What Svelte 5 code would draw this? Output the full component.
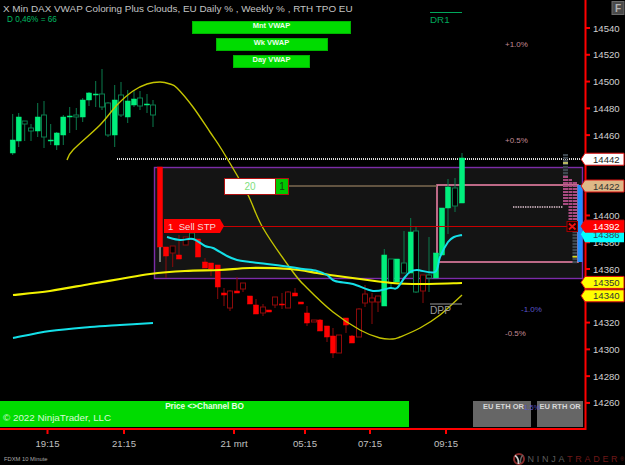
<script>
  const priceY = (p) => 28 + (14540 - p) * 1.339;

  // x, wick top, wick bottom, body top, body bottom, filled
  const green = [
    [12.7,114,155,140,153,1],[18.7,113,147,117,141,1],[24.7,121,141,121,124,0],[31,124,141,128,131,0],
    [37.7,103,137,117,131,1],[44,101,148,115,137,0],[50.7,124,145,140,141,1],[56.7,132,150,133,145,1],
    [63.3,115,145,117,135,1],[69.7,107,133,116,117,1],[76.3,108,130,115,117,0],[82.7,98,122,100,117,1],
    [89,92,106,93,100,1],[95.7,81,107,94,95,1],[102,69,110,94,107,0],[108,102,137,103,135,0],
    [114.7,85,147,100,135,1],[121,82,117,95,115,0],[127.7,90,123,101,117,1],[134,90,107,99,105,1],
    [140,91,110,98,106,0],[147,94,113,104,105,1],[153,100,127,105,115,0],
    [192,233,239,233,239,0],
    [384.3,249,306,255,306,1],[391,259,288,259,283,0],[397,259,282,259,282,1],[404,231,273,263,273,0],
    [410.7,218,273,232,273,1],[416,226,293,231,292,0],[429,237,292,275,278,0],[436,253,278,253,278,1],
    [442,208,255,208,255,1],[448,179,234,187,208,1],[455,178,212,188,206,0],[462,153,203,158,203,1]
  ];
  const red = [
    [160,167,247,167,247,1],[166,247,278,247,256,1],[172.7,246,267,246,253,0],[179,235,259,255,259,1],
    [185.7,237,245,237,245,0],[198,239,257,239,257,1],[205,258,268,262,268,1],[211,263,276,263,269,1],
    [217.7,265,299,265,287,1],[224,288,306,293,295,1],[230,290,311,291,308,0],[237,277,293,291,293,1],
    [243,283,292,283,289,0],[250,296,304,296,304,1],[256,299,314,305,314,1],[263,304,316,307,313,0],
    [269,310,312,310,312,1],[275,297,308,297,305,0],[282,293,309,304,305,1],[288,291,308,292,308,0],
    [295,288,296,293,296,1],[301,302,304,302,304,1],[307,306,326,313,323,1],[314,320,322,320,322,0],
    [320,319,331,320,331,1],[327,326,342,326,337,1],[333,328,358,336,353,1],[339,335,353,335,353,0],
    [346,318,333,318,325,1],[352,335,343,336,343,1],[359,308,337,309,337,0],[365,285,307,294,303,0],
    [372,293,324,298,302,0],[378,296,312,296,302,0],[423,275,303,275,291,0]
  ];

  const axisPrices = [14540,14520,14500,14480,14460,14400,14380,14360,14320,14300,14280,14260];
  const tickPrices = [14540,14520,14500,14480,14460,14440,14420,14400,14380,14360,14340,14320,14300,14280,14260];
  const flags = [
    { price: 14442, fill: '#ffffff', text: '#222222' },
    { price: 14422, fill: '#deb887', text: '#333333' },
    { price: 14386, fill: '#00ffff', text: '#334455', h: 8, noBorder: true },
    { price: 14392, fill: '#ff0000', text: '#ffffff' },
    { price: 14350, fill: '#ffff00', text: '#333333' },
    { price: 14340, fill: '#ffff00', text: '#333333' }
  ];
  const flagPoints = (y, h = 6) => `581,${y} 585,${y - h} 624,${y - h} 624,${y + h} 585,${y + h}`;

  // catmull-rom through the sampled points
  const smooth = (pts) => {
    let d = `M${pts[0][0]} ${pts[0][1]}`;
    for (let i = 0; i < pts.length - 1; i++) {
      const p0 = pts[Math.max(i - 1, 0)];
      const p1 = pts[i];
      const p2 = pts[i + 1];
      const p3 = pts[Math.min(i + 2, pts.length - 1)];
      const c1x = p1[0] + (p2[0] - p0[0]) / 6;
      const c1y = p1[1] + (p2[1] - p0[1]) / 6;
      const c2x = p2[0] - (p3[0] - p1[0]) / 6;
      const c2y = p2[1] - (p3[1] - p1[1]) / 6;
      d += `C${c1x} ${c1y} ${c2x} ${c2y} ${p2[0]} ${p2[1]}`;
    }
    return d;
  };

  const bigCurve = smooth([[67,160],[73,150],[100,125],[117,105],[133,91],[147,84],[160,82],[170,84],[177,88],[193,107],[210,132],[222,150],[247,193],[263,228],[293,272],[307,288],[333,312],[360,330],[380,338],[393,339],[400,337],[420,328],[440,315],[462,295]]);
  const vwap = smooth([[13,295],[50,291],[90,284],[120,279],[150,274],[185,271],[220,270],[250,268],[290,269],[317,273],[330,275],[360,279],[392,283],[420,284],[462,283]]);
  const cyanLow = smooth([[13,338],[50,331],[90,327],[120,325],[153,323]]);
  const cyanHigh = smooth([[167,237],[180,240],[193,239],[205,246],[213,248],[227,256],[237,260],[250,262],[267,264],[290,267],[303,269],[317,271],[327,275],[335,281],[353,284],[373,291],[390,288],[397,288],[405,277],[410,272],[417,270],[435,272],[440,257],[448,242],[454,237],[462,235]]);

  const rows = (x0, y0, y1, w) => {
    const out = [];
    for (let y = y0; y < y1; y += 3) out.push({ x: x0, y, w });
    return out;
  };
  const pinkRows = [...rows(563, 176, 206, 5), ...rows(568.5, 179, 222, 3.5), ...rows(572.5, 182, 222, 4.5)];
  const greyRows = [...rows(563, 154, 176, 5), ...rows(572.5, 222, 262, 4.5)];

  const timeTicks = [
    { x: 47.5, label: '19:15' },
    { x: 124, label: '21:15' },
    { x: 234, label: '21 mrt' },
    { x: 305, label: '05:15' },
    { x: 370, label: '07:15' },
    { x: 446, label: '09:15' }
  ];
</script>

<div class="screen">
  <div class="chart">
    <svg class="plot" width="625" height="431" viewBox="0 0 625 431">
      <rect x="154.5" y="167.5" width="428" height="111" class="cloud" />
      <rect x="437" y="185" width="141" height="77" class="pink-box" />
      <line x1="117" y1="159" x2="581" y2="159" class="dotted" />
      <line x1="289" y1="186" x2="437" y2="186" class="tan" />
      <line x1="513" y1="207" x2="563" y2="207" class="dotted-pink" />

      {#each greyRows as r}
        <rect x={r.x} y={r.y} width={r.w} height="2.2" class="grey-row" />
      {/each}
      <rect x="563" y="162" width="5" height="2" fill="#b8b860" />
      <rect x="572.5" y="256" width="4.5" height="1.6" fill="#d8d820" />
      {#each pinkRows as r}
        <rect x={r.x} y={r.y} width={r.w} height="2" class="pink-row" />
      {/each}
      <rect x="577.5" y="185" width="5" height="77" fill="#1e90ff" />

      {#each green as [x, wt, wb, bt, bb, filled]}
        <line x1={x} x2={x} y1={wt} y2={wb} class="wick-green" />
        <rect x={x - 2.5} y={bt} width="5" height={Math.max(bb - bt, 1)} class={filled ? 'up' : 'up-hollow'} />
      {/each}
      {#each red as [x, wt, wb, bt, bb, filled]}
        <line x1={x} x2={x} y1={wt} y2={wb} class="wick-red" />
        <rect x={x - 2.5} y={bt} width="5" height={Math.max(bb - bt, 1)} class={filled ? 'down' : 'down-hollow'} />
      {/each}
      <rect x="159" y="247" width="2" height="15" fill="#777777" />

      <path d={bigCurve} class="curve" />
      <path d={vwap} class="vwap" />
      <path d={cyanLow} class="cyan" />
      <path d={cyanHigh} class="cyan" />

      <line x1="222" y1="226.5" x2="567" y2="226.5" class="red-line" />
      <polygon points="164,219 220,219 224,226 220,233 164,233" fill="#ff0000" />
      <text x="168" y="229.5" class="flag-label">1&nbsp; Sell STP</text>

      <rect x="224.5" y="178.5" width="51" height="16" fill="#ffffff" class="order-edge" />
      <rect x="275.5" y="178.5" width="13" height="16" fill="#00c800" class="order-edge" />
      <text x="250" y="190" class="order-qty">20</text>
      <text x="282" y="190" class="order-side">1</text>

      <line x1="430" y1="12.5" x2="462" y2="12.5" class="dr-line" />
      <text x="430" y="23" class="dr">DR1</text>
      <line x1="430" y1="304" x2="462" y2="304" class="dpp-line" />
      <text x="430" y="314" class="dpp">DPP</text>
      <text x="505" y="47" class="pct pct-pink">+1.0%</text>
      <text x="505" y="143" class="pct pct-pink">+0.5%</text>
      <text x="521" y="312" class="pct pct-blue">-1.0%</text>
      <text x="505" y="336" class="pct pct-pink">-0.5%</text>

      <rect x="567" y="221.5" width="10.5" height="10" fill="#200000" stroke="#a00000" />
      <path d="M569 223.5L575.5 229.5M575.5 223.5L569 229.5" class="cross" />

      <line x1="585.5" y1="0" x2="585.5" y2="430" class="axis" />
      <line x1="0" y1="429" x2="586" y2="429" class="axis" />
      {#each tickPrices as p}
        <line x1="586" x2="590" y1={priceY(p)} y2={priceY(p)} class="axis" />
      {/each}
      {#each axisPrices as p}
        <text x="593" y={priceY(p) + 3.5} class="price">{p}</text>
      {/each}

      {#each flags as f}
        <polygon points={flagPoints(priceY(f.price), f.h)} fill={f.fill} class={f.noBorder ? '' : 'flag'} />
        <text x="593" y={priceY(f.price) + 3.5} class="price" style:fill={f.text}>{f.price}</text>
      {/each}

      <rect x="612" y="1.5" width="12" height="13" class="f-box" />
      <text x="618" y="12" class="f-text">F</text>
    </svg>

    <div class="legend">
      <div class="title">X Min DAX VWAP Coloring Plus Clouds, EU Daily % , Weekly % , RTH TPO EU</div>
      <div class="sub">D 0,46% = 66</div>
    </div>

    <div class="vwap-buttons">
      <div class="vwap-btn mnt">Mnt VWAP</div>
      <div class="vwap-btn wk">Wk VWAP</div>
      <div class="vwap-btn day">Day VWAP</div>
    </div>

    <div class="bottom-bar">
      <div class="channel">
        <div class="channel-title">Price &lt;&gt;Channel BO</div>
        <div class="copyright">© 2022 NinjaTrader, LLC</div>
      </div>
      <div class="or eth">EU ETH OR</div>
      <div class="or rth">EU RTH OR</div>
      <span class="or-pct">1.5%</span>
    </div>
  </div>

  <svg class="time" width="625" height="20" viewBox="0 0 625 20">
    {#each timeTicks as t}
      <line x1={t.x} x2={t.x} y1="0" y2="4" class="axis" />
      <text x={t.x} y="17" class="time-label">{t.label}</text>
    {/each}
  </svg>

  <div class="footer">
    <span class="instrument">FDXM 10 Minute</span>
    <div class="logo">
      <svg width="14" height="12" viewBox="0 0 14 12">
        <circle cx="7" cy="6" r="5" fill="none" stroke="#8a2a2a" stroke-width="2" />
        <path d="M3 2.5Q7 5 6.5 11" fill="none" stroke="#cfcfcf" stroke-width="1.8" />
        <path d="M11 2Q8 5 8.5 10" fill="none" stroke="#666666" stroke-width="1.5" />
      </svg>
      <span class="ninja">NINJA</span><span class="trader">TRADER</span><span class="reg">®</span>
    </div>
  </div>
</div>

<style>
  :global(body) {
    margin: 0;
    background: #000;
  }
  .screen {
    width: 625px;
    height: 465px;
    background: #000;
    overflow: hidden;
    display: flex;
    flex-direction: column;
    font-family: "Liberation Sans", Arial, sans-serif;
  }
  .chart {
    position: relative;
    height: 430px;
    flex: none;
  }
  svg {
    display: block;
    flex: none;
    font-family: "Liberation Sans", Arial, sans-serif;
  }

  .cloud { fill: #141414; stroke: #7c2ca8; stroke-width: 1.4; }
  .pink-box { fill: none; stroke: #e87fa4; stroke-width: 1.6; }
  .dotted { stroke: #d8d8d8; stroke-width: 2; stroke-dasharray: 1 1; }
  .dotted-pink { stroke: #b09aa4; stroke-width: 2; stroke-dasharray: 1.4 1; }
  .tan { stroke: #7d6a50; stroke-width: 1.5; }
  .grey-row { fill: #3e4850; }
  .pink-row { fill: #a84a80; }

  .up { fill: #00ef7c; stroke: #00ef7c; stroke-width: 0.5; }
  .up-hollow { fill: #000; stroke: #0b7a4c; stroke-width: 1; }
  .wick-green { stroke: #0b7a4c; stroke-width: 1; }
  .down { fill: #ff0000; stroke: #ff0000; stroke-width: 0.5; }
  .down-hollow { fill: #000; stroke: #8c0b0b; stroke-width: 1; }
  .wick-red { stroke: #8c0b0b; stroke-width: 1; }

  .curve { fill: none; stroke: #c4c400; stroke-width: 1.4; }
  .vwap { fill: none; stroke: #f2f200; stroke-width: 2.2; }
  .cyan { fill: none; stroke: #14e0e8; stroke-width: 2; }
  .red-line { stroke: #c80000; stroke-width: 1; }

  .flag-label { fill: #f4d8d8; font-size: 9.6px; }
  .order-edge { stroke: #b01010; stroke-width: 1; }
  .order-qty { fill: #7ee07e; font-size: 10px; text-anchor: middle; }
  .order-side { fill: #14401a; font-size: 10px; text-anchor: middle; }

  .dr-line { stroke: #00a85c; stroke-width: 1; }
  .dr { fill: #00a85c; font-size: 9.8px; }
  .dpp-line { stroke: #9a9a9a; stroke-width: 1; }
  .dpp { fill: #9a9a9a; font-size: 10.2px; }
  .pct { font-size: 8px; }
  .pct-pink { fill: #c08a94; }
  .pct-blue { fill: #5a56c8; }

  .cross { fill: none; stroke: #f01010; stroke-width: 1.8; }

  .axis { stroke: #ff0000; stroke-width: 2; }
  .price { fill: #d0d0d0; font-size: 9.6px; }
  .flag { stroke: #e01010; stroke-width: 1; }

  .f-box { fill: #4a4a4a; stroke: #6a6a6a; stroke-width: 1; }
  .f-text { fill: #b4b4b4; font-size: 10px; font-weight: bold; text-anchor: middle; }

  .legend {
    position: absolute;
    top: 3px;
    left: 3px;
    pointer-events: none;
  }
  .title {
    color: #c4c4c4;
    font-size: 9.9px;
    line-height: 12px;
    white-space: nowrap;
  }
  .sub {
    color: #00b860;
    font-size: 8.2px;
    line-height: 9px;
    margin-left: 4px;
  }

  .vwap-buttons {
    position: absolute;
    top: 21px;
    left: 192px;
    width: 159px;
    display: flex;
    flex-direction: column;
    align-items: center;
    gap: 4px;
  }
  .vwap-btn {
    height: 13px;
    box-sizing: border-box;
    background: #00dc00;
    border: 1px solid #00b400;
    color: #eaffea;
    font-size: 7.5px;
    font-weight: bold;
    line-height: 8px;
    text-align: center;
    white-space: nowrap;
  }
  .mnt { width: 159px; }
  .wk { width: 112px; }
  .day { width: 77px; }

  .bottom-bar {
    position: absolute;
    top: 401px;
    left: 0;
    width: 584px;
    height: 26px;
    display: flex;
    gap: 6px;
  }
  .channel {
    width: 409px;
    margin-right: 58px;
    background: #00dc00;
    box-sizing: border-box;
    padding: 1px 3px;
  }
  .channel-title {
    color: #eaffea;
    font-size: 8.2px;
    font-weight: bold;
    line-height: 9px;
    text-align: center;
  }
  .copyright {
    color: #d8f8d8;
    font-size: 9.8px;
    line-height: 12px;
    margin-top: 1px;
  }
  .or {
    background: #666666;
    color: #d8d8d8;
    font-size: 7.5px;
    font-weight: bold;
    line-height: 9px;
    padding-top: 1px;
    box-sizing: border-box;
    text-align: center;
    white-space: nowrap;
  }
  .eth { width: 58px; padding-left: 3px; }
  .rth { width: 46px; }
  .or-pct {
    position: absolute;
    left: 524px;
    top: 2px;
    color: #5a56c8;
    font-size: 7px;
    line-height: 9px;
  }

  .time-label {
    fill: #c0c0c0;
    font-size: 9.6px;
    text-anchor: middle;
  }

  .footer {
    display: flex;
    flex: none;
    justify-content: space-between;
    align-items: center;
    height: 13px;
    margin-top: 2px;
    padding: 0 1px 0 4px;
  }
  .instrument {
    color: #a8a8a8;
    font-size: 5.8px;
  }
  .logo {
    display: flex;
    align-items: center;
    gap: 2px;
    font-size: 9px;
    letter-spacing: 2.7px;
    white-space: nowrap;
  }
  .logo span + span {
    margin-left: -2px;
  }
  .ninja { color: #5c5c5c; }
  .trader { color: #6e1818; }
  .reg { color: #6e1818; font-size: 5px; letter-spacing: 0; }
</style>
